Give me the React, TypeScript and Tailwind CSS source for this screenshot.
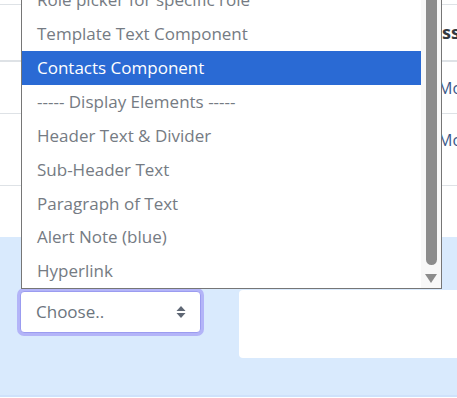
const items = [
  "Role picker for specific role",
  "Template Text Component",
  "Contacts Component",
  "----- Display Elements -----",
  "Header Text & Divider",
  "Sub-Header Text",
  "Paragraph of Text",
  "Alert Note (blue)",
  "Hyperlink",
];

export default function App() {
  return (
    <div
      className="relative h-[398px] w-[457px] overflow-hidden bg-white"
      style={{ fontFamily: '"Open Sans", "Noto Sans", sans-serif' }}
    >
      {/* table behind */}
      <div className="flex flex-col">
        <div className="h-[5px] border-b border-[#dee2e6]" />
        <div className="flex h-[57px] items-center justify-end border-b-2 border-[#dee2e6]">
          <span className="mr-[-3px] text-[18px] font-bold text-[#343a40]">ss</span>
        </div>
        <div className="flex h-[52px] items-center justify-end border-b border-[#dee2e6]">
          <span className="mr-[-5px] text-[16px] text-[#3b5a8a]">Mo</span>
        </div>
        <div className="flex h-[72px] items-start justify-end border-b border-[#dee2e6] pt-[14px]">
          <span className="mr-[-5px] text-[16px] text-[#3b5a8a]">Mo</span>
        </div>
        <div className="h-[51px]" />
        <div className="flex h-[160px] items-start gap-[35px] border-b-2 border-[#cfe2fb] bg-[#d9eafd] pl-[17px] pt-[51px]">
          <div className="rounded-[7px] bg-[#b3b4f8] p-[3px]">
            <div className="flex h-[42px] w-[181px] items-center justify-between rounded-[4px] border border-[#9b9cf0] bg-white pl-[15px] pr-[14px]">
              <span className="text-[17px] text-[#6c757d]">Choose..</span>
              <svg width="10" height="14" viewBox="0 0 10 14">
                <path d="M5 1 L9.5 6 H0.5 Z" fill="#5f6774" />
                <path d="M5 13 L9.5 8 H0.5 Z" fill="#5f6774" />
              </svg>
            </div>
          </div>
          <div className="mt-[2px] h-[68px] flex-1 rounded-l-[4px] bg-white" />
        </div>
      </div>

      {/* open dropdown list */}
      <div className="absolute left-[21px] top-[-18px] flex h-[307px] w-[421px] border border-[#767676] bg-white">
        <div className="flex flex-1 flex-col">
          {items.map((t) => (
            <div
              key={t}
              className={
                t === "Contacts Component"
                  ? "flex h-[34px] items-center bg-[#2a6ad4] pl-[15px] text-[17px] text-white"
                  : "flex h-[34px] items-center pl-[15px] text-[17px] text-[#757b83]"
              }
            >
              {t}
            </div>
          ))}
        </div>
        <div className="flex w-[20px] flex-col items-center bg-[#f8f8f8]">
          <div className="h-[282px] w-[11px] rounded-b-[6px] bg-[#8c8c8c]" />
          <svg className="mt-[9px]" width="12" height="9" viewBox="0 0 12 9">
            <path d="M0 0 H12 L6 9 Z" fill="#8c8c8c" />
          </svg>
        </div>
      </div>
    </div>
  );
}
